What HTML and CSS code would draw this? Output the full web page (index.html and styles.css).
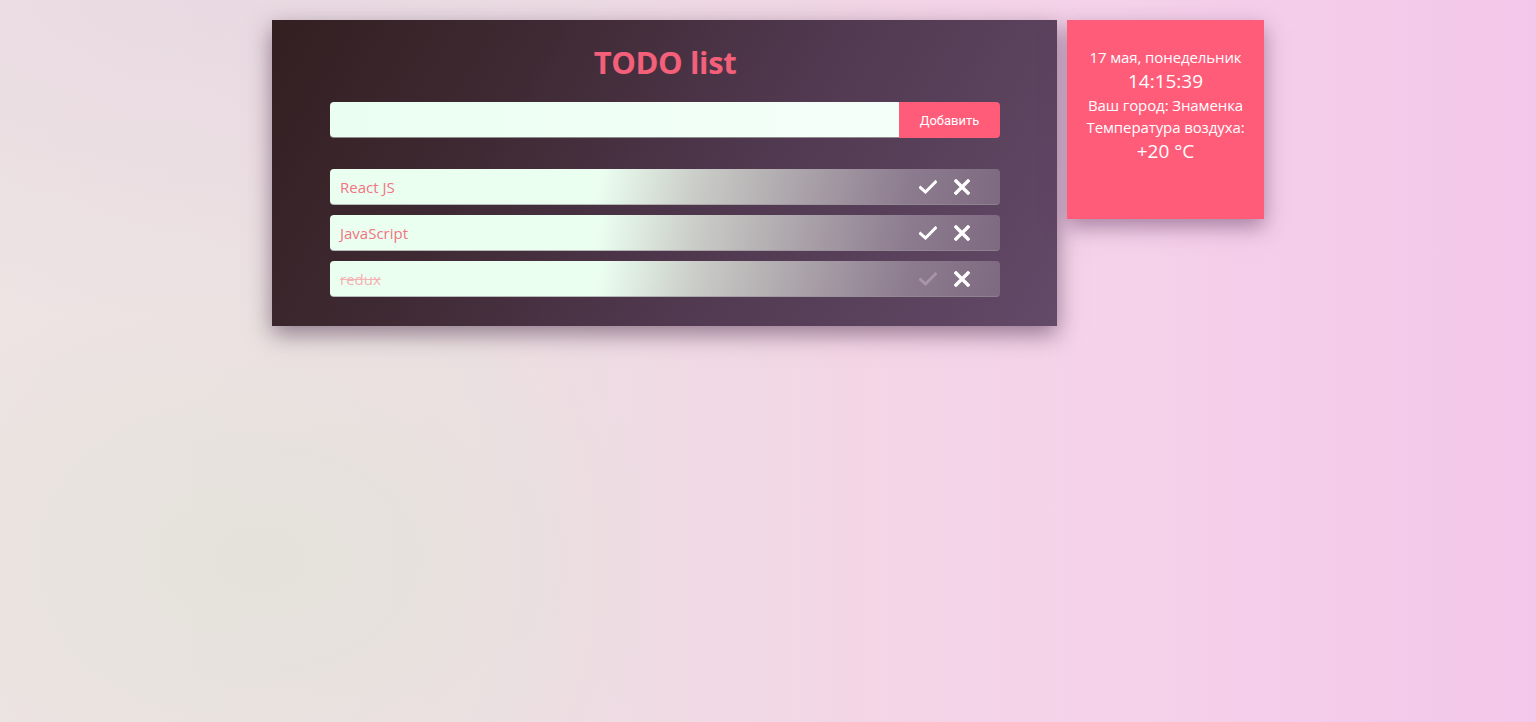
FILE: index.html
```html
<!DOCTYPE html>
<html lang="ru">
<head>
<meta charset="utf-8">
<title>TODO list</title>
<link rel="stylesheet" href="styles.css">
</head>
<body>
<div class="page">
  <main class="todo">
    <h1 class="todo__title">TODO list</h1>
    <form class="todo__form">
      <input class="todo__input" type="text">
      <button class="todo__add" type="button">Добавить</button>
    </form>
    <ul class="todo__list">
      <li class="item">
        <span class="item__text">React JS</span>
        <span class="item__actions">
          <svg class="icon icon--check" viewBox="0 0 18 14" width="18" height="14"><path d="M1.5 7.5 L6.5 12 L16.5 2" fill="none" stroke="currentColor" stroke-width="3" stroke-linecap="square" stroke-linejoin="miter"/></svg>
          <svg class="icon icon--close" viewBox="0 0 16 16" width="16" height="16"><path d="M2 2 L14 14 M14 2 L2 14" fill="none" stroke="currentColor" stroke-width="3.4" stroke-linecap="square"/></svg>
        </span>
      </li>
      <li class="item">
        <span class="item__text">JavaScript</span>
        <span class="item__actions">
          <svg class="icon icon--check" viewBox="0 0 18 14" width="18" height="14"><path d="M1.5 7.5 L6.5 12 L16.5 2" fill="none" stroke="currentColor" stroke-width="3" stroke-linecap="square" stroke-linejoin="miter"/></svg>
          <svg class="icon icon--close" viewBox="0 0 16 16" width="16" height="16"><path d="M2 2 L14 14 M14 2 L2 14" fill="none" stroke="currentColor" stroke-width="3.4" stroke-linecap="square"/></svg>
        </span>
      </li>
      <li class="item item--done">
        <span class="item__text">redux</span>
        <span class="item__actions">
          <svg class="icon icon--check" viewBox="0 0 18 14" width="18" height="14"><path d="M1.5 7.5 L6.5 12 L16.5 2" fill="none" stroke="currentColor" stroke-width="3" stroke-linecap="square" stroke-linejoin="miter"/></svg>
          <svg class="icon icon--close" viewBox="0 0 16 16" width="16" height="16"><path d="M2 2 L14 14 M14 2 L2 14" fill="none" stroke="currentColor" stroke-width="3.4" stroke-linecap="square"/></svg>
        </span>
      </li>
    </ul>
  </main>
  <aside class="weather">
    <div class="weather__line">17 мая, понедельник</div>
    <div class="weather__big">14:15:39</div>
    <div class="weather__line">Ваш город: Знаменка</div>
    <div class="weather__line">Температура воздуха:</div>
    <div class="weather__big">+20 °C</div>
  </aside>
</div>
</body>
</html>
```

FILE: styles.css
```css
* { box-sizing: border-box; }

html, body { height: 100%; }

body {
  margin: 0;
  font-family: "Open Sans", "Noto Sans", "Liberation Sans", sans-serif;
  background:
    radial-gradient(ellipse 420px 300px at 260px 560px, rgba(228,226,218,0.9), rgba(228,226,218,0) 100%),
    radial-gradient(ellipse 800px 320px at 200px 0px, rgba(232,214,226,0.7), rgba(232,214,226,0) 100%),
    linear-gradient(90deg, #ede4e3 0%, #ece0e2 30%, #f3d6e6 55%, #f5d2ea 72%, #f3c7e9 100%);
  overflow: hidden;
}

.page {
  display: flex;
  align-items: flex-start;
  gap: 10px;
  padding: 20px 0 0 272px;
}

.todo {
  width: 785px;
  height: 306px;
  padding: 20px 57px 0 58px;
  background: linear-gradient(120deg, #331f20 0%, #3f2a34 30%, #523a52 62%, #634a68 100%);
  box-shadow: 0 8px 22px rgba(70, 40, 70, 0.55);
}

.todo__title {
  margin: 0;
  text-align: center;
  font-family: "Open Sans", "Noto Sans", sans-serif;
  font-weight: 700;
  font-size: 31px;
  line-height: 44px;
  color: #f4607a;
  letter-spacing: -0.4px;
}

.todo__form {
  display: flex;
  margin: 18px 0 0;
  height: 36px;
}

.todo__input {
  flex: 1;
  height: 36px;
  border: none;
  border-bottom: 1px solid #8f8a8c;
  border-radius: 4px 0 0 4px;
  background: linear-gradient(90deg, #eafff1, #f5fff9);
  padding: 0 10px;
  outline: none;
}

.todo__add {
  width: 101px;
  height: 36px;
  border: none;
  border-radius: 0 4px 4px 0;
  background: #ff5c7a;
  color: #fff;
  font-family: "Roboto", "Liberation Sans", sans-serif;
  font-size: 13px;
  padding: 0;
}

.todo__list {
  list-style: none;
  margin: 31px 0 0;
  padding: 0;
  display: flex;
  flex-direction: column;
  gap: 10px;
}

.item {
  height: 36px;
  display: flex;
  align-items: center;
  justify-content: space-between;
  padding: 0 30px 0 10px;
  border-radius: 4px;
  border-bottom: 1px solid rgba(150,140,150,0.6);
  background: linear-gradient(102deg, #ebfff1 0%, #ebfff1 40%, #c9cbc6 55%, #a79ea6 72%, #8c7b8f 86%, #7e6a80 100%);
}

.item__text {
  font-family: "Open Sans", "Noto Sans", sans-serif;
  font-size: 15px;
  color: #f07482;
  letter-spacing: 0;
}

.item--done .item__text {
  text-decoration: line-through;
  color: #f4b2b4;
}

.item__actions {
  display: flex;
  align-items: center;
  gap: 17px;
  color: #ffffff;
}

.icon { display: block; }
.icon--check { width: 18px; height: 14px; }
.icon--close { width: 16px; height: 16px; }

.item--done .icon--check { color: #a794a6; }

.weather {
  width: 197px;
  height: 199px;
  padding-top: 26px;
  background: #ff5c7a;
  color: #fff;
  text-align: center;
  box-shadow: 0 8px 20px rgba(90, 50, 90, 0.5);
  font-family: "Open Sans", "Noto Sans", sans-serif;
}

.weather__line {
  font-size: 15px;
  line-height: 22px;
  letter-spacing: -0.1px;
}

.weather__big {
  font-size: 19px;
  line-height: 26px;
}
```
